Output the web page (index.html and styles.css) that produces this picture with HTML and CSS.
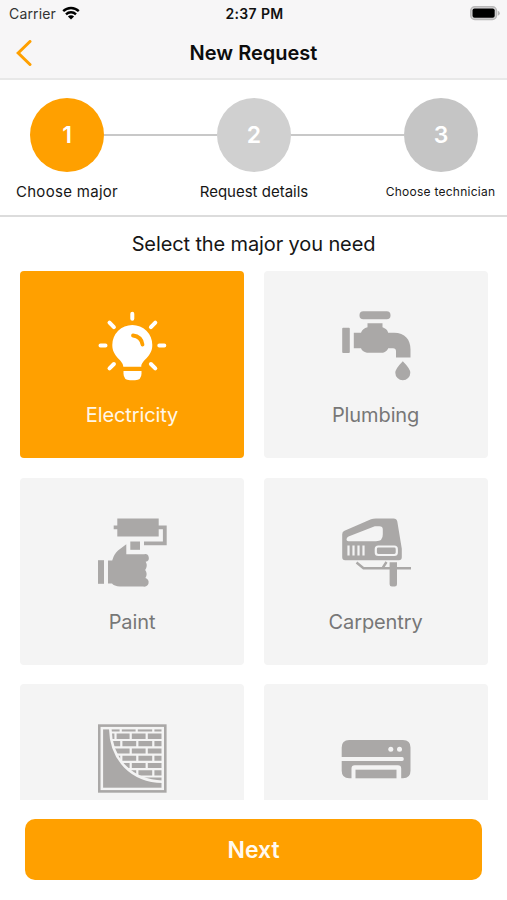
FILE: index.html
```html
<!doctype html>
<html lang="en">
  <head>
    <meta charset="UTF-8" />
    <title>New Request</title>
    <link rel="stylesheet" href="styles.css">
  </head>

  <body>
    <!-- Status bar + navigation -->
    <header class="header">
      <div class="status-bar">
        <div class="carrier">
          <span>Carrier</span>
          <svg class="wifi" viewBox="0 0 18 14">
            <path d="M1.2 5.2a11.2 11.2 0 0 1 15.6 0M4 8.3a7.2 7.2 0 0 1 10 0" fill="none" stroke="#000" stroke-width="2.4" />
            <path d="M9 13.6 5.9 10.5a4.4 4.4 0 0 1 6.2 0z" />
          </svg>
        </div>
        <div class="time">2:37 PM</div>
        <svg class="battery" viewBox="0 0 31 15">
          <rect x="1.8" y=".8" width="25.6" height="12.6" rx="4" fill="#dcdbdc" stroke="#b9b8b9" stroke-width="1.6" />
          <rect x="3.5" y="2.4" width="22.2" height="9.4" rx="2" />
          <path d="M28.8 4.8v5q2-.8 2-2.5t-2-2.5z" fill="#b5b4b5" />
        </svg>
      </div>
      <div class="nav-bar">
        <svg class="back" viewBox="0 0 16 26">
          <path d="M14 1.5 2.2 13 14 24.5" />
        </svg>
        <h1 class="title">New Request</h1>
      </div>
    </header>

    <!-- Steps -->
    <section class="steps">
      <div class="step-circles">
        <span class="circle active">1</span>
        <span class="line"></span>
        <span class="circle">2</span>
        <span class="line"></span>
        <span class="circle last">3</span>
      </div>
      <div class="step-labels">
        <span class="current">Choose major</span>
        <span>Request details</span>
        <span class="small">Choose technician</span>
      </div>
    </section>

    <h2 class="subtitle">Select the major you need</h2>

    <!-- Majors -->
    <main class="majors">
      <div class="card selected">
        <svg class="icon" viewBox="0 0 70 70">
          <path d="M26.3 55.8c0-7-11-9.5-11-21.8a20 20 0 0 1 40 0c0 12.300-11 14.800-11 21.800z" />
          <path d="M26.500 60h18v2.500q0 6.700-6.500 6.700h-5q-6.500 0-6.500-6.700z" />
          <path class="rays" d="M35.3 2.8v5M3.500 34.600h5M62.300 34.600h5M12.500 11.700l4.400 4.400M58.300 11.700l-4.400 4.400M16.900 53l-4.400 4.400M53.900 53l4.400 4.400" />
          <path class="shine" d="M36 24.500q8.200 1 9.500 9" />
        </svg>
        <span class="name">Electricity</span>
      </div>

      <div class="card">
        <svg class="icon" viewBox="0 0 70 70">
          <rect x="18.500" y=".3" width="31" height="8" rx="3.800" />
          <rect x="1.200" y="16.700" width="7.600" height="25.200" rx="1" />
          <path d="M26.500 12.300h15v4q4.500 1.500 5.700 5.400H53c11 0 16.500 7 16.500 16.500v8.300H55v-6.300q0-2.900-3-2.900h-4.800q-1.200 3.200-5.200 4.500H26q-5-1.500-6-4.500h-7.200V21.700H20q1.500-4 6.500-5.400z" />
          <path d="M61.800 50.300q7.500 7.500 7.500 11.500a7.500 7.500 0 0 1-15 0q0-4 7.500-11.500z" />
        </svg>
        <span class="name">Plumbing</span>
      </div>

      <div class="card">
        <svg class="icon" viewBox="0 0 70 70">
          <path d="M20.300.5h41.400v7h8v19.700H47v-3.700h18.900V11.200h-4.200v7.300H20.300v-7.300h-3.600V7.500h3.600z" />
          <rect x="33.300" y="23.500" width="9.700" height="8.300" />
          <rect x="1" y="42.200" width="6" height="23.600" />
          <path d="M11 42.500h4.200Q17 36 21 32.500L29.300 26.300v9.900h17.900a3.500 3.500 0 0 1 1.500 7.600q2.300 4-.5 8.200 2.800 4 .2 8.100a4.300 4.300 0 0 1-2.200 8.400H23q-6-.5-8-3h-4z" />
        </svg>
        <span class="name">Paint</span>
      </div>

      <div class="card">
        <svg class="icon" viewBox="0 0 70 70">
          <path fill-rule="evenodd" d="M3.500 12.800 30 1.300Q32 .5 35 .5h17.500q3.200 0 3.800 3l4.500 27.200v8.500q0 3-3 3H4.200q-3 0-3-3v-23q0-2.500 2.300-3.400zM7.500 18.600q-2 1-2 3t2.700 1.600H35q7 0 6.800-7v-4.800q0-3.200-3.400-3.200h-4.600z" />
          <path class="cut" d="M7.500 27.500v10M12.500 27.500v10M17.500 27.500v10M22.500 27.500v10" />
          <rect class="cut" x="34.800" y="28.500" width="21" height="8.500" rx="2.500" />
          <path class="foot" d="M15.500 44.500 22.500 50.200H70M45.500 44l-3.600 5.500" />
          <path d="M48.600 44.200H56v22q0 2.300-2.300 2.300h-2.800q-2.300 0-2.300-2.300z" />
        </svg>
        <span class="name">Carpentry</span>
      </div>

      <div class="card">
        <svg class="icon" viewBox="0 0 70 70">
          <rect class="frame" x="2.300" y="1.600" width="66" height="65.800" />
          <rect x="5.700" y="5" width="59.800" height="59.500" />
          <path class="mortar" d="M14 8.500h51.500M14 16h51.500M16 23.300h49.500M18 30.600h47.500M22 37.900h43.500M28 45.200h37.500M36 52.500h29.500" />
          <path class="mortar" d="M23.700 5v3.500M39.700 5v3.500M56.300 5v3.500M18.500 8.500V16M33.700 8.500V16M49.700 8.500V16M24.300 16v7.300M40.300 16v7.300M56.300 16v7.300M33.700 23.300v7.300M49.700 23.300v7.300M24.300 30.600v7.300M40.300 30.600v7.300M56.300 30.600v7.300M33.700 37.900v7.300M49.700 37.900v7.300M40.300 45.200v7.300M56.300 45.200v7.300" />
          <path d="M5.700 5h7.600C14 36 35 57 65.500 57.700v6.800H5.700z" />
          <path class="mortar curve" d="M13.300 5C14 36 35 57 65.500 57.700" />
          <rect class="mortar" x="5" y="4.300" width="60.600" height="60.500" />
        </svg>
      </div>

      <div class="card">
        <svg class="icon" viewBox="0 0 70 70">
          <path d="M.7 33v-9.500q0-7.500 7.500-7.500H62q7.500 0 7.500 7.500v23.300q0 7.500-7.500 7.500h-1.800V44.500q0-3.200-3.200-3.200H13.700q-3.200 0-3.200 3.200v9.800H8.200q-7.500 0-7.500-7.500V37h60.500q1.600 0 1.600-2t-1.600-2z" />
          <rect x="14.500" y="45.700" width="41" height="8.600" />
          <circle class="dot" cx="49.800" cy="25.300" r="2.500" />
          <circle class="dot" cx="58.500" cy="25.300" r="2.500" />
        </svg>
      </div>
    </main>

    <button class="next" type="button">Next</button>
  </body>
</html>
```

FILE: styles.css
```css
* {
  box-sizing: border-box;
}

body {
  display: flex;
  flex-direction: column;
  height: 900px;
  margin: 0;
  overflow: hidden;
  background-color: #fff;
  color: #161616;
  font-family: Inter, "Liberation Sans", sans-serif;
}

svg {
  display: block;
}

.header {
  height: 80px;
  border-bottom: 2px solid #e8e8e8;
  background-color: #f7f6f7;
}

.status-bar {
  display: grid;
  grid-template-columns: 1fr auto 1fr;
  align-items: center;
  height: 27px;
  padding: 0 7px 0 9px;
  font-size: 14px;
}

.carrier {
  display: flex;
  align-items: center;
  gap: 6px;
  color: #333;
  letter-spacing: 0.15px;
}

.wifi {
  width: 18px;
  height: 14px;
  margin-top: -2px;
}

.time {
  color: #111;
  font-weight: 600;
  letter-spacing: 0.35px;
}

.battery {
  justify-self: end;
  width: 31px;
  height: 15px;
}

.nav-bar {
  display: grid;
  grid-template-columns: 1fr auto 1fr;
  align-items: center;
  height: 51px;
  padding: 0 16px;
}

.back {
  width: 16px;
  height: 26px;
}

.back path {
  fill: none;
  stroke: #ffa000;
  stroke-width: 3;
  stroke-linecap: round;
}

.title {
  margin: 0;
  color: #0c0c0c;
  font-size: 20px;
  font-weight: 600;
}

.steps {
  height: 137px;
  padding-top: 18px;
  border-bottom: 2px solid #dcdcdc;
}

.step-circles {
  display: flex;
  align-items: center;
  padding: 0 29px 0 30px;
}

.circle {
  width: 74px;
  height: 74px;
  border-radius: 50%;
  background-color: #d0d0d0;
  color: #fff;
  font-size: 23px;
  font-weight: 600;
  line-height: 75px;
  text-align: center;
}

.circle.active {
  background-color: #ffa000;
}

.circle.last {
  background-color: #c5c5c5;
}

.line {
  flex: 1;
  height: 2px;
  background-color: #c8c8c8;
}

.step-labels {
  display: grid;
  grid-template-columns: 134px 1fr 133px;
  align-items: center;
  height: 20px;
  margin-top: 9px;
  font-size: 15px;
  text-align: center;
}

.step-labels .current {
  letter-spacing: 0.3px;
}

.step-labels .small {
  padding-top: 1px;
  font-size: 12px;
  letter-spacing: 0.25px;
}

.subtitle {
  height: 54px;
  margin: 0;
  font-size: 20px;
  font-weight: 400;
  letter-spacing: -0.12px;
  line-height: 55px;
  text-align: center;
}

.majors {
  display: grid;
  grid-template-columns: 1fr 1fr;
  grid-auto-rows: 187px;
  gap: 19.6px;
  height: 529px;
  padding: 0 19.4px 0 20px;
  overflow: hidden;
}

.card {
  display: flex;
  flex-direction: column;
  align-items: center;
  padding-top: 40px;
  border-radius: 4px;
  background-color: #f4f4f4;
  color: #777;
}

.card.selected {
  background-color: #ffa000;
  color: #fff7e8;
}

.icon {
  width: 70px;
  height: 70px;
  fill: #aaa8a7;
}

.selected .icon {
  fill: #fff;
}

.rays {
  stroke: #fff;
  stroke-width: 4;
  stroke-linecap: round;
}

.selected .shine {
  fill: none;
  stroke: #ffa000;
  stroke-width: 3.8;
  stroke-linecap: round;
}

.cut {
  fill: none;
  stroke: #f4f4f4;
  stroke-width: 2.2;
}

.foot {
  fill: none;
  stroke: #aaa8a7;
  stroke-width: 2.4;
}

.frame {
  fill: none;
  stroke: #aaa8a7;
  stroke-width: 2.6;
}

.mortar {
  fill: none;
  stroke: #f4f4f4;
  stroke-width: 2.2;
}

.curve {
  stroke-width: 2.6;
}

.dot {
  fill: #f4f4f4;
}

.name {
  margin-top: 21px;
  font-size: 20px;
  letter-spacing: -0.1px;
  line-height: 27px;
}

.next {
  width: 457px;
  height: 61px;
  margin: 19px auto 0 25px;
  padding: 1px 0 0;
  border: none;
  border-radius: 10px;
  background-color: #ffa000;
  color: #fffaf0;
  font-family: inherit;
  font-size: 23px;
  font-weight: 600;
}
```
